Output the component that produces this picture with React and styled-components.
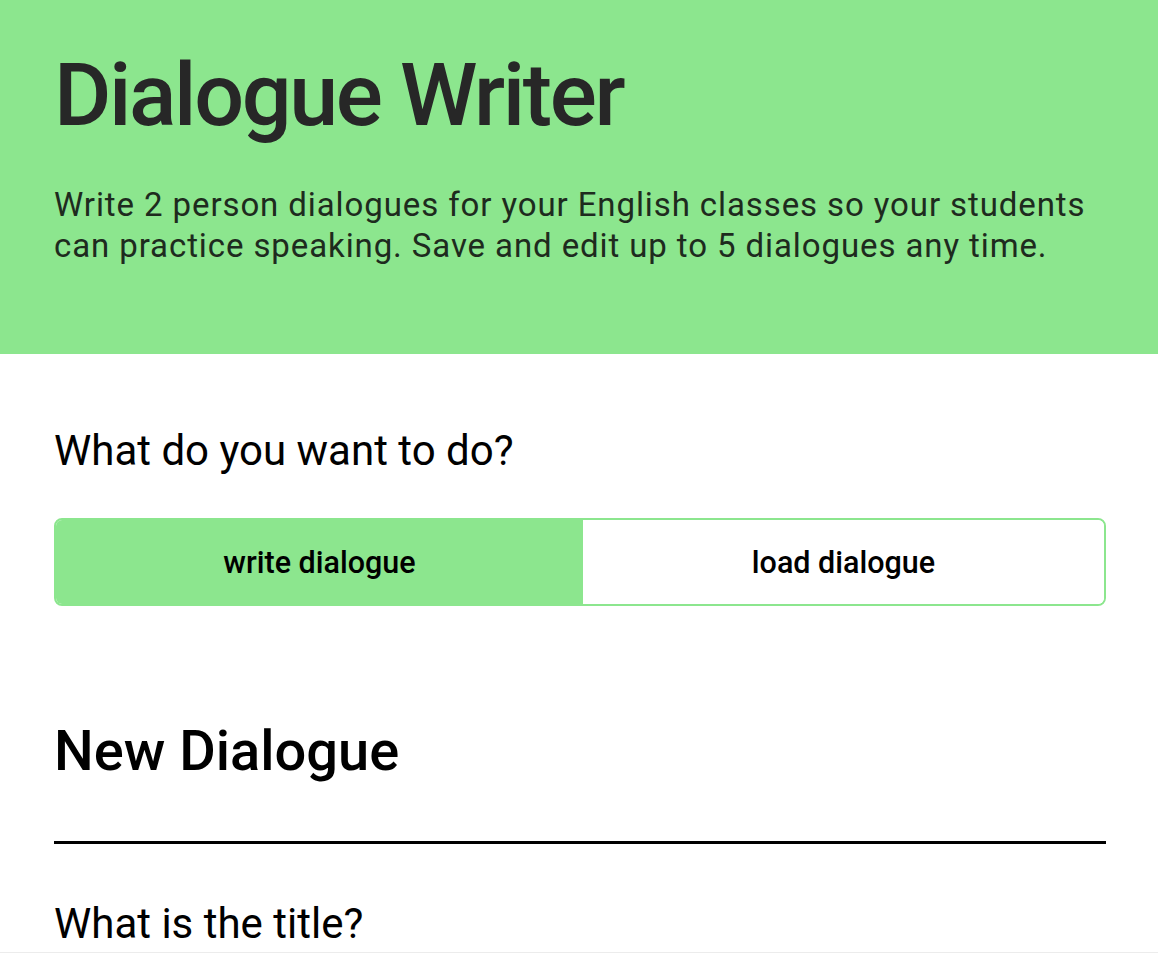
import React from "react";
import styled, { createGlobalStyle } from "styled-components";

const Global = createGlobalStyle`
  html, body { margin: 0; padding: 0; background: #fff; }
  body { font-family: Roboto, "Noto Sans", Arial, sans-serif; color: #000; }
  * { box-sizing: border-box; }
`;

const Header = styled.header`
  background: #8ce68e;
  height: 354px;
  padding: 40px 52px 0 54px;
`;

const Title = styled.h1`
  margin: 0;
  font-size: 88px;
  font-weight: 500;
  line-height: 110px;
  letter-spacing: -2.4px;
  color: #272727;
`;

const Lead = styled.p`
  margin: 34px 0 0;
  font-size: 33px;
  font-weight: 400;
  line-height: 41px;
  letter-spacing: 0.9px;
  color: #1e2b1e;
`;

const Main = styled.main`
  padding: 70px 52px 0 54px;
`;

const Question = styled.h2`
  margin: 0;
  font-size: 42px;
  font-weight: 400;
  line-height: 54px;
`;

const Label = styled.label`
  display: block;
  font-size: 42px;
  font-weight: 400;
  line-height: 54px;
`;

const Toggle = styled.div`
  display: grid;
  grid-template-columns: 527fr 521fr;
  margin-top: 40px;
  height: 88px;
  border: 2px solid #8ce68e;
  border-radius: 8px;
  overflow: hidden;
`;

const ToggleButton = styled.button`
  border: none;
  margin: 0;
  padding: 0;
  font-family: inherit;
  font-size: 30.5px;
  font-weight: 500;
  color: #000;
  background: ${(p) => (p.$active ? "#8ce68e" : "#fff")};
  cursor: pointer;
`;

const SectionTitle = styled.h2`
  margin: 110px 0 0;
  font-size: 56px;
  font-weight: 500;
  line-height: 70px;
`;

const Rule = styled.hr`
  margin: 55px 0 0;
  border: none;
  height: 3px;
  background: #000;
`;

const Field = styled.div`
  margin-top: 53px;
`;

const Panel = styled.section`
  margin-top: 1px;
  height: 80px;
  background: #ececec;
`;

export default function App() {
  return (
    <>
      <Global />
      <Header>
        <Title>Dialogue Writer</Title>
        <Lead>
          Write 2 person dialogues for your English classes so your students
          can practice speaking. Save and edit up to 5 dialogues any time.
        </Lead>
      </Header>
      <Main>
        <Question>What do you want to do?</Question>
        <Toggle>
          <ToggleButton $active>write dialogue</ToggleButton>
          <ToggleButton>load dialogue</ToggleButton>
        </Toggle>
        <SectionTitle>New Dialogue</SectionTitle>
        <Rule />
        <Field>
          <Label>What is the title?</Label>
        </Field>
      </Main>
      <Panel />
    </>
  );
}
